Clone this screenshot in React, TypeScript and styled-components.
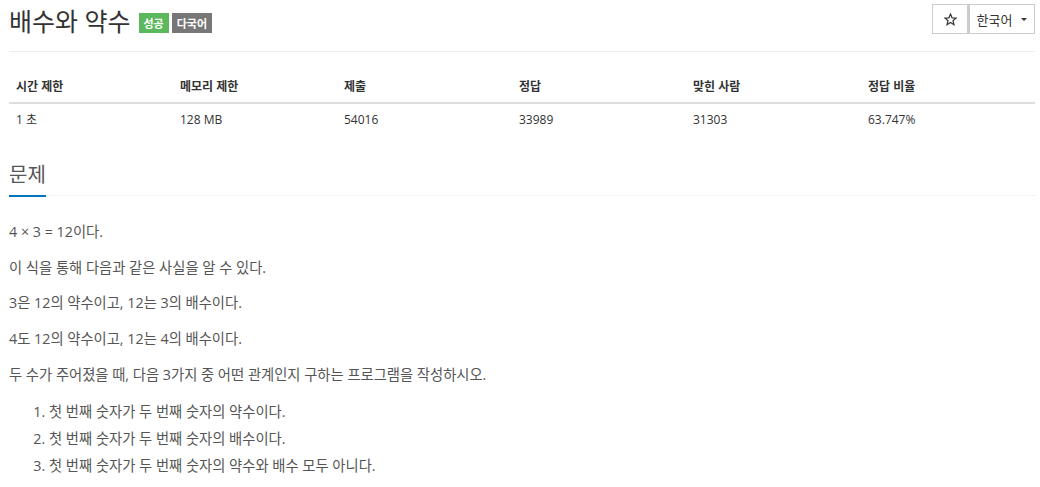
import React from "react";
import styled, { createGlobalStyle } from "styled-components";

const GlobalStyle = createGlobalStyle`
  html, body { margin: 0; padding: 0; background: #fff; }
  body {
    font-family: "Open Sans", "Noto Sans CJK KR", sans-serif;
    font-size: 13px;
    color: #333;
  }
`;

const Page = styled.div`
  padding: 0 5px 0 9px;
`;

const Header = styled.div`
  display: flex;
  justify-content: space-between;
  align-items: flex-start;
  height: 52px;
  border-bottom: 1px solid #eee;
  box-sizing: border-box;
`;

const TitleRow = styled.div`
  display: flex;
  align-items: center;
  height: 43px;
`;

const Title = styled.h1`
  margin: 0;
  font-size: 25px;
  font-weight: 400;
  color: #333;
  line-height: 1;
`;

const Label = styled.span<{ $tone: "success" | "default" }>`
  display: inline-flex;
  align-items: center;
  height: 20px;
  padding: 0 5px;
  margin-left: ${(p) => (p.$tone === "success" ? "8px" : "3px")};
  margin-top: 3px;
  font-size: 11px;
  font-weight: 700;
  color: #fff;
  background: ${(p) => (p.$tone === "success" ? "#5cb85c" : "#777")};
`;

const BtnGroup = styled.div`
  display: flex;
  margin-top: 4px;
`;

const Btn = styled.button<{ $w: number }>`
  display: flex;
  align-items: center;
  justify-content: center;
  gap: 9px;
  width: ${(p) => p.$w}px;
  height: 30px;
  padding: 0;
  border: 1px solid #ccc;
  background: #fff;
  font-family: inherit;
  font-size: 13px;
  color: #333;
  & + & { border-left-width: 2px; }
`;

const Caret = styled.span`
  width: 0;
  height: 0;
  border-left: 3px solid transparent;
  border-right: 3px solid transparent;
  border-top: 3px solid #333;
`;

const Table = styled.table`
  width: 100%;
  margin-top: 18px;
  border-collapse: collapse;
  table-layout: fixed;
`;

const Th = styled.th<{ $w: number }>`
  box-sizing: border-box;
  width: ${(p) => p.$w}px;
  padding: 8px 7px 6px;
  text-align: left;
  font-size: 12px;
  font-weight: 700;
  line-height: 18px;
  border-bottom: 2px solid #ddd;
  color: #333;
`;

const Td = styled.td`
  padding: 7px 7px;
  font-size: 12px;
  line-height: 18px;
  color: #333;
`;

const Headline = styled.div`
  margin-top: 27px;
  border-bottom: 1px dotted #e4e9f0;
`;

const SectionTitle = styled.h2`
  display: inline-block;
  margin: 0 0 -2px 0;
  padding-bottom: 8px;
  font-size: 20px;
  font-weight: 400;
  line-height: 24px;
  color: #555;
  border-bottom: 2px solid #0076c0;
`;

const Description = styled.div`
  margin-top: 23px;
  font-size: 14.3px;
  line-height: 1.8;
  color: #555;
`;

const Para = styled.p`
  margin: 0 0 10px;
`;

const List = styled.ol`
  margin: 0;
  padding-left: 40px;
`;

const Item = styled.li`
  line-height: 27px;
`;

const StarIcon = () => (
  <svg width="13" height="13" viewBox="0 0 24 24" fill="none" stroke="#333" strokeWidth="2.2" strokeLinejoin="miter">
    <polygon points="12,2 14.9,8.9 22.3,9.4 16.6,14.2 18.4,21.5 12,17.6 5.6,21.5 7.4,14.2 1.7,9.4 9.1,8.9" />
  </svg>
);

const columns = [
  { h: "시간 제한", v: "1 초", w: 164 },
  { h: "메모리 제한", v: "128 MB", w: 164 },
  { h: "제출", v: "54016", w: 175 },
  { h: "정답", v: "33989", w: 174 },
  { h: "맞힌 사람", v: "31303", w: 175 },
  { h: "정답 비율", v: "63.747%", w: 174 },
];

export default function App() {
  return (
    <>
      <GlobalStyle />
      <Page>
        <Header>
          <TitleRow>
            <Title>배수와 약수</Title>
            <Label $tone="success">성공</Label>
            <Label $tone="default">다국어</Label>
          </TitleRow>
          <BtnGroup>
            <Btn $w={36}><StarIcon /></Btn>
            <Btn $w={67}>한국어<Caret /></Btn>
          </BtnGroup>
        </Header>
        <Table>
          <thead>
            <tr>
              {columns.map((c) => (
                <Th key={c.h} $w={c.w}>{c.h}</Th>
              ))}
            </tr>
          </thead>
          <tbody>
            <tr>
              {columns.map((c) => (
                <Td key={c.h}>{c.v}</Td>
              ))}
            </tr>
          </tbody>
        </Table>
        <Headline>
          <SectionTitle>문제</SectionTitle>
        </Headline>
        <Description>
          <Para>4 × 3 = 12이다.</Para>
          <Para>이 식을 통해 다음과 같은 사실을 알 수 있다.</Para>
          <Para>3은 12의 약수이고, 12는 3의 배수이다.</Para>
          <Para>4도 12의 약수이고, 12는 4의 배수이다.</Para>
          <Para>두 수가 주어졌을 때, 다음 3가지 중 어떤 관계인지 구하는 프로그램을 작성하시오.</Para>
          <List>
            <Item>첫 번째 숫자가 두 번째 숫자의 약수이다.</Item>
            <Item>첫 번째 숫자가 두 번째 숫자의 배수이다.</Item>
            <Item>첫 번째 숫자가 두 번째 숫자의 약수와 배수 모두 아니다.</Item>
          </List>
        </Description>
      </Page>
    </>
  );
}
